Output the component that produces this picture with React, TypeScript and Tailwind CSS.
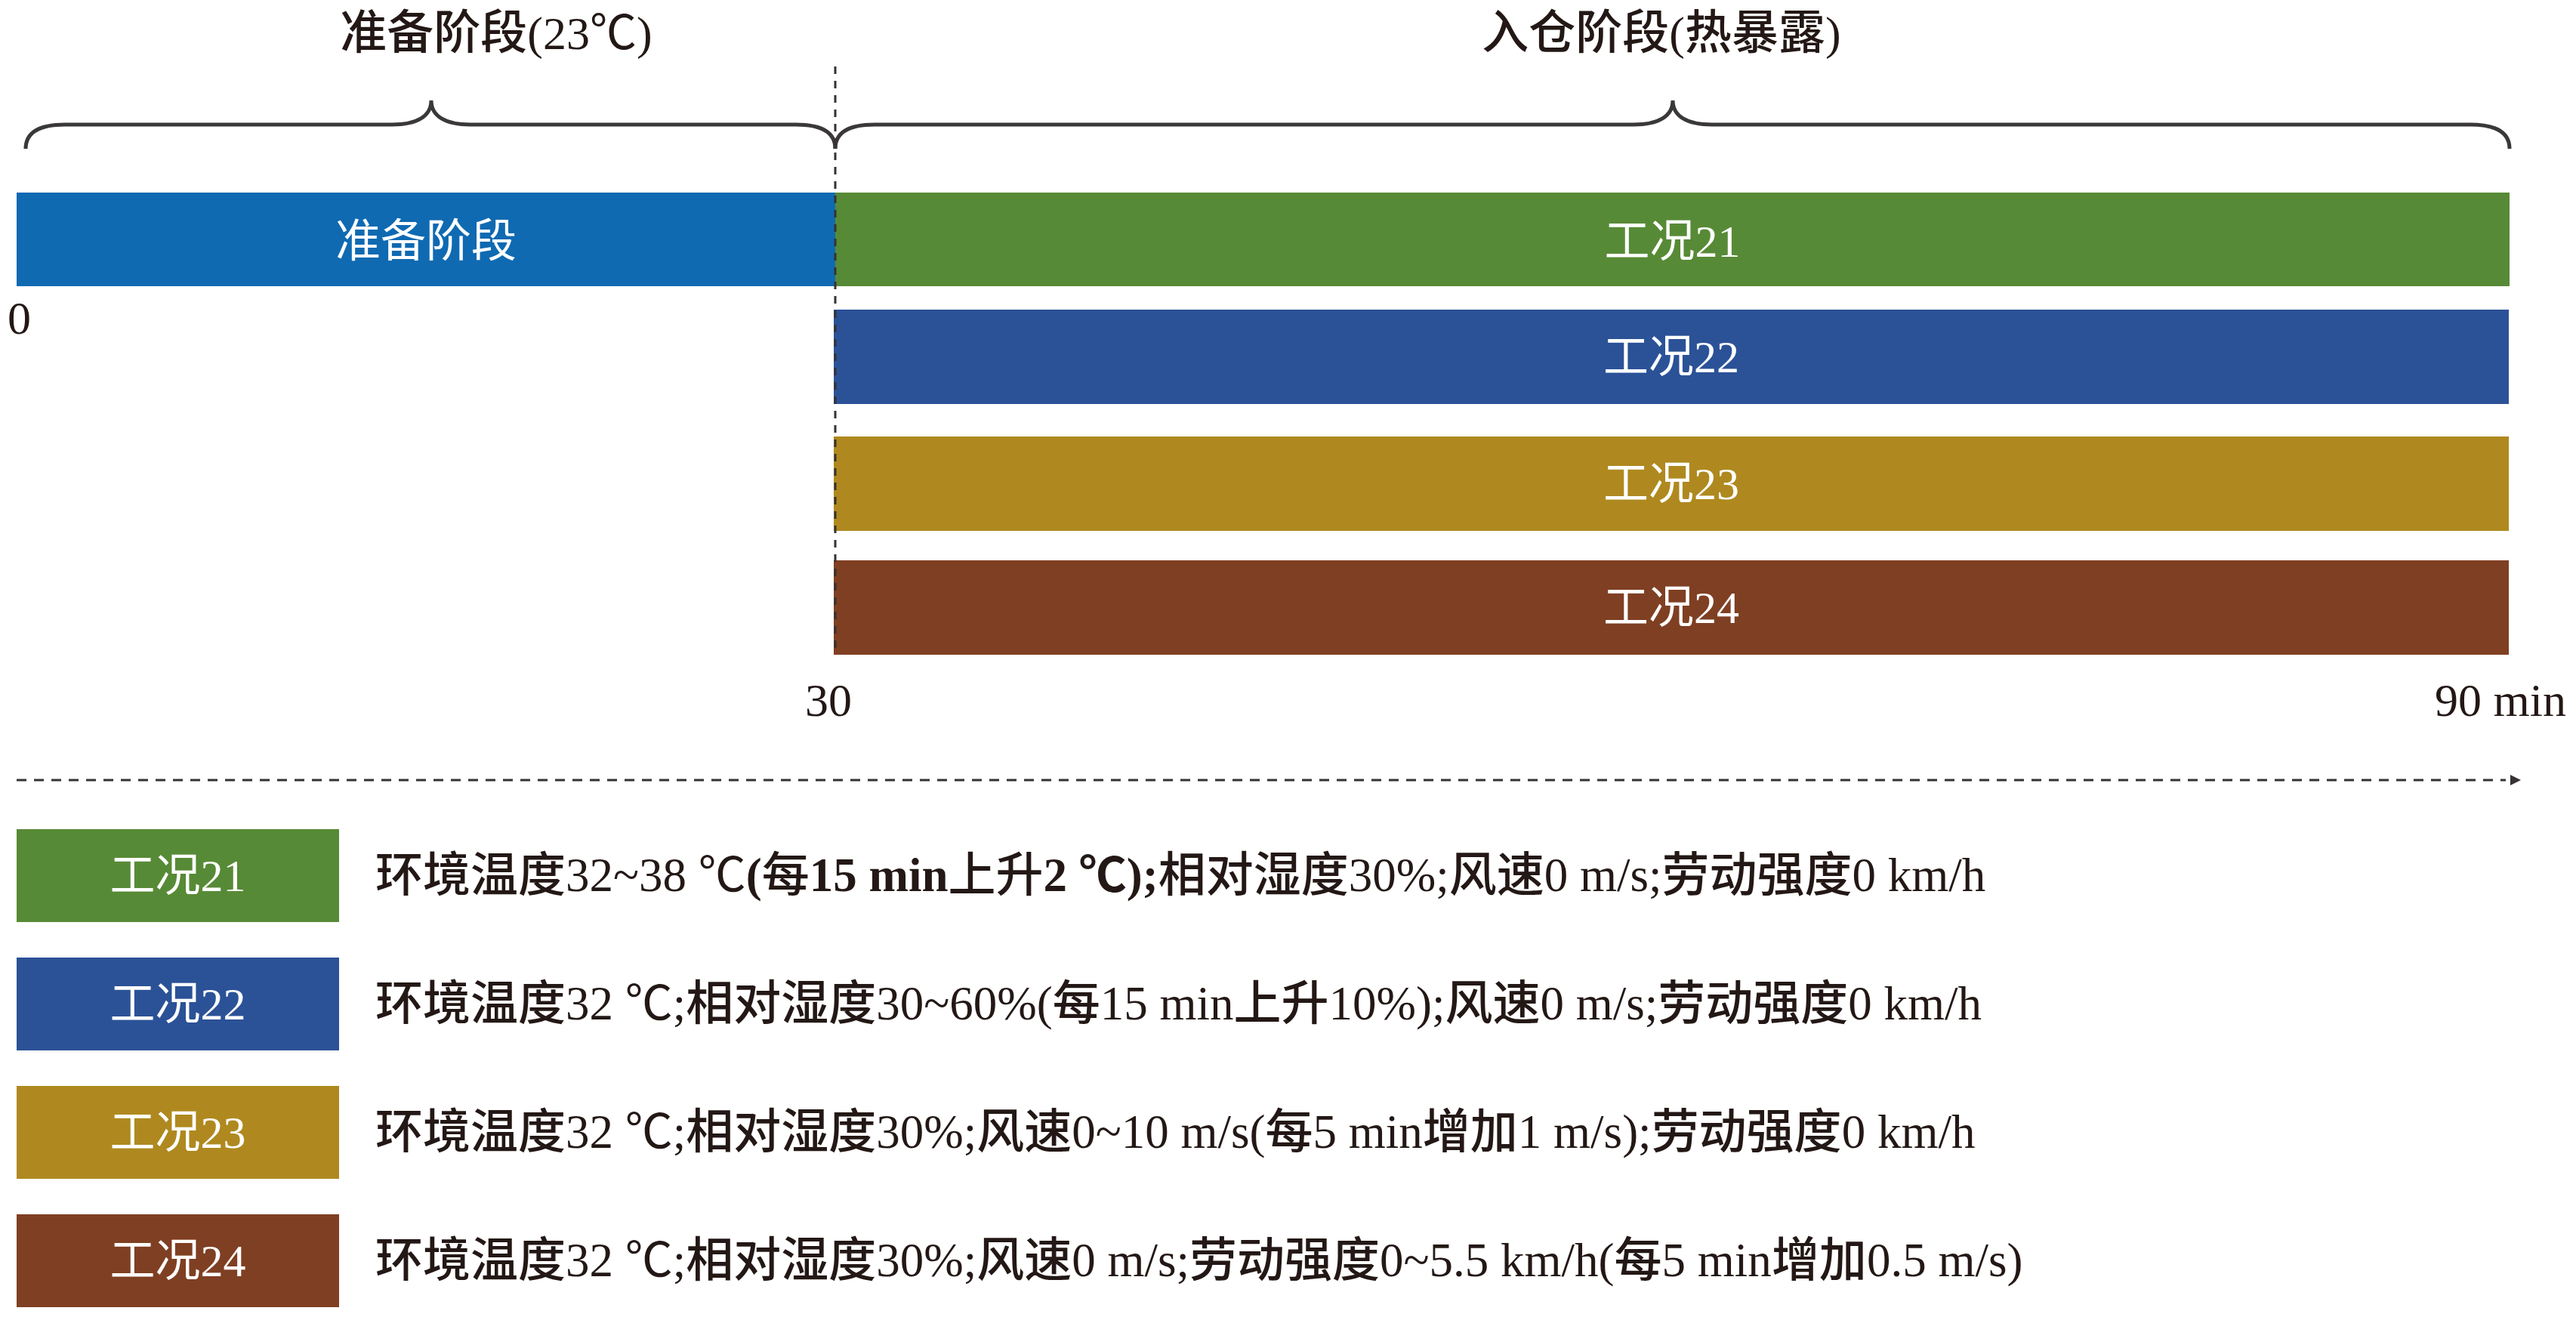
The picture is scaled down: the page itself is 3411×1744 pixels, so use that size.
import React from "react";

const CJK_RUN = /([\u3400-\u9fff\uff00-\uffef]+)/;

// Splits a string so the Chinese runs can get their own weight.
function Mixed({ text, cjk }: { text: string; cjk: string }) {
  const parts = text.split(CJK_RUN);
  return (
    <>
      {parts.map((part, i) =>
        i % 2 === 1 ? (
          <span key={i} className={cjk}>
            {part}
          </span>
        ) : (
          <React.Fragment key={i}>{part}</React.Fragment>
        )
      )}
    </>
  );
}

const CASES = [
  {
    label: "工况21",
    color: "bg-[#578a36]",
    parts: [
      { text: "环境温度32~38 ℃", bold: false },
      { text: "(每15 min上升2 ℃);", bold: true },
      { text: "相对湿度30%;风速0 m/s;劳动强度0 km/h", bold: false },
    ],
  },
  {
    label: "工况22",
    color: "bg-[#2b5297]",
    parts: [{ text: "环境温度32 ℃;相对湿度30~60%(每15 min上升10%);风速0 m/s;劳动强度0 km/h", bold: false }],
  },
  {
    label: "工况23",
    color: "bg-[#af891f]",
    parts: [{ text: "环境温度32 ℃;相对湿度30%;风速0~10 m/s(每5 min增加1 m/s);劳动强度0 km/h", bold: false }],
  },
  {
    label: "工况24",
    color: "bg-[#7f3f22]",
    parts: [{ text: "环境温度32 ℃;相对湿度30%;风速0 m/s;劳动强度0~5.5 km/h(每5 min增加0.5 m/s)", bold: false }],
  },
];

function Bar({ label, color, className }: { label: string; color: string; className: string }) {
  return (
    <div className={`${color} ${className} flex items-center justify-center text-white text-[60px] leading-none`}>
      <Mixed text={label} cjk="font-normal" />
    </div>
  );
}

export default function App() {
  return (
    <div className="relative w-[3411px] h-[1744px] bg-white text-[#231815] font-['Liberation_Serif','Noto_Sans_CJK_SC',serif] overflow-hidden">
      {/* phase titles */}
      <div className="flex h-[88px] items-center text-[62px] leading-none whitespace-nowrap">
        <div className="ml-[257px] w-[800px] text-center">
          <Mixed text="准备阶段(23℃)" cjk="font-medium" />
        </div>
        <div className="ml-[643px] w-[1000px] text-center">
          <Mixed text="入仓阶段(热暴露)" cjk="font-medium" />
        </div>
      </div>

      {/* braces */}
      <svg width="3411" height="112" viewBox="0 0 3411 112" className="block">
        <g fill="none" stroke="#3b3838" strokeWidth="5">
          <path d="M34 109 C34 88 50 77 86 77 L519 77 C552 77 571 66 571 45 C571 66 590 77 623 77 L1054 77 C1090 77 1106 88 1106 109" />
          <path d="M1106 109 C1106 88 1122 77 1158 77 L2163 77 C2196 77 2215 66 2215 45 C2215 66 2234 77 2267 77 L3271 77 C3307 77 3323 88 3323 109" />
        </g>
      </svg>

      {/* preparation + first case */}
      <div className="mt-[55px] flex pl-[22px]">
        <Bar label="准备阶段" color="bg-[#0f6ab2]" className="w-[1084px] h-[124px] pt-[6px]" />
        <Bar label="工况21" color="bg-[#578a36]" className="w-[2217px] h-[124px] pt-[6px]" />
      </div>

      <div className="flex">
        <div className="w-[1104px] pl-[10px] pt-[11px] text-[62px] leading-none">0</div>
        <div className="flex w-[2218px] flex-col pt-[31px]">
          <Bar label="工况22" color="bg-[#2b5297]" className="h-[125px]" />
          <Bar label="工况23" color="bg-[#af891f]" className="mt-[43px] h-[125px]" />
          <Bar label="工况24" color="bg-[#7f3f22]" className="mt-[39px] h-[125px]" />
        </div>
      </div>

      {/* time axis */}
      <div className="mt-[29px] flex justify-between pl-[1066px] pr-[13px] text-[62px] leading-none">
        <span>30</span>
        <span>90 min</span>
      </div>

      <svg width="3411" height="20" viewBox="0 0 3411 20" className="mt-[65px] block">
        <line x1="22" y1="10" x2="3318" y2="10" stroke="#363232" strokeWidth="3" strokeDasharray="13 10" />
        <polygon points="3324,3 3338,10 3324,17" fill="#363232" />
      </svg>

      {/* legend */}
      <div className="mt-[55px] flex flex-col gap-[47px] pl-[22px]">
        {CASES.map((c) => (
          <div key={c.label} className="flex items-center">
            <Bar label={c.label} color={c.color} className="w-[427px] h-[123px] shrink-0" />
            <div className="ml-[48px] whitespace-nowrap text-[63px] leading-none">
              {c.parts.map((p, i) => (
                <span key={i} className={p.bold ? "font-bold" : "font-normal"}>
                  <Mixed text={p.text} cjk="font-medium" />
                </span>
              ))}
            </div>
          </div>
        ))}
      </div>

      {/* boundary between phases, drawn over the bars */}
      <svg width="6" height="779" viewBox="0 0 6 779" className="absolute left-[1103px] top-[88px]">
        <line x1="3" y1="0" x2="3" y2="779" stroke="#363232" strokeWidth="3" strokeDasharray="10 9" />
      </svg>
    </div>
  );
}
